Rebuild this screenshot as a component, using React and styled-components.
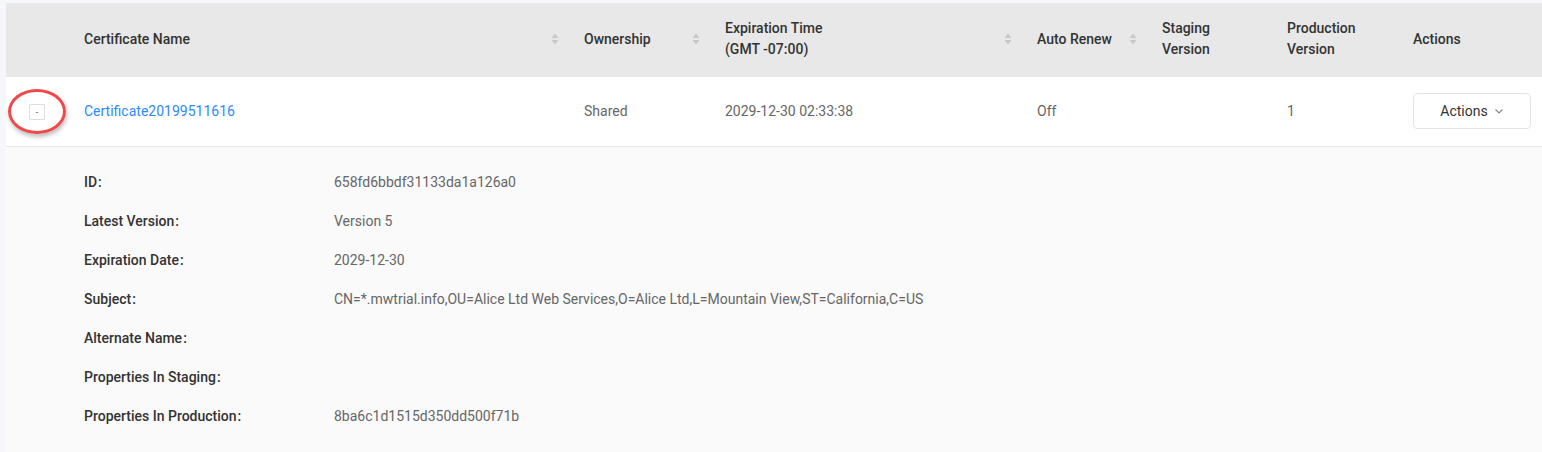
import styled, { createGlobalStyle } from "styled-components";

const GlobalStyle = createGlobalStyle`
  html, body {
    margin: 0;
    padding: 0;
    background: #f5f7fa;
  }
  body {
    padding: 3px 0 0 6px;
    font-family: Roboto, "Liberation Sans", Arial, sans-serif;
    font-size: 14px;
    color: #333;
    overflow: hidden;
  }
`;

const COLS = "62px 500px 141px 312px 125px 125px 126px 1fr";

const columns = [
  { title: "Certificate Name", sort: true },
  { title: "Ownership", sort: true },
  { title: ["Expiration Time", "(GMT -07:00)"], sort: true },
  { title: "Auto Renew", sort: true },
  { title: ["Staging", "Version"] },
  { title: ["Production", "Version"] },
  { title: "Actions" },
];

const details = [
  ["ID", "658fd6bbdf31133da1a126a0"],
  ["Latest Version", "Version 5"],
  ["Expiration Date", "2029-12-30"],
  ["Subject", "CN=*.mwtrial.info,OU=Alice Ltd Web Services,O=Alice Ltd,L=Mountain View,ST=California,C=US"],
  ["Alternate Name", ""],
  ["Properties In Staging", ""],
  ["Properties In Production", "8ba6c1d1515d350dd500f71b"],
];

const SortIcon = () => (
  <svg width="8" height="12" viewBox="0 0 8 12">
    <path d="M4 0.5 L7.5 5 L0.5 5 Z" fill="#c8c8c8" />
    <path d="M4 11.5 L7.5 7 L0.5 7 Z" fill="#c8c8c8" />
  </svg>
);

const Chevron = () => (
  <svg width="10" height="10" viewBox="0 0 10 10">
    <path d="M1.5 3.5 L5 7 L8.5 3.5" fill="none" stroke="#888" strokeWidth="1.1" />
  </svg>
);

const App = () => (
  <>
    <GlobalStyle />
    <Panel>
      <HeaderRow>
        <HeadCell />
        {columns.map((c, i) => (
          <HeadCell key={i} $sort={c.sort}>
            <div>
              {Array.isArray(c.title)
                ? c.title.map((t) => <div key={t}>{t}</div>)
                : c.title}
            </div>
            {c.sort && <SortIcon />}
          </HeadCell>
        ))}
      </HeaderRow>
      <BodyRow>
        <ExpandCell>
          <ExpandButton>-</ExpandButton>
          <Highlight />
        </ExpandCell>
        <Cell>
          <Link href="#">Certificate20199511616</Link>
        </Cell>
        <Cell>Shared</Cell>
        <Cell>2029-12-30 02:33:38</Cell>
        <Cell>Off</Cell>
        <Cell />
        <Cell>1</Cell>
        <Cell>
          <ActionButton>
            Actions <Chevron />
          </ActionButton>
        </Cell>
      </BodyRow>
      <Expanded>
        {details.map(([label, value]) => (
          <DetailRow key={label}>
            <Label>
              {label}
              <Colon>:</Colon>
            </Label>
            <Value>{value}</Value>
          </DetailRow>
        ))}
      </Expanded>
    </Panel>
  </>
);

const Panel = styled.div`
  width: 1536px;
`;

const HeaderRow = styled.div`
  display: grid;
  grid-template-columns: ${COLS};
  height: 74px;
  background: #e8e8e8;
`;

const HeadCell = styled.div`
  display: flex;
  align-items: center;
  justify-content: space-between;
  padding: 0 ${(p) => (p.$sort ? "9px" : "16px")} 2px 16px;
  font-weight: 500;
  color: #333;
  line-height: 21px;
`;

const BodyRow = styled.div`
  display: grid;
  grid-template-columns: ${COLS};
  height: 69px;
  background: #fff;
  border-bottom: 1px solid #e8e8e8;
`;

const Cell = styled.div`
  display: flex;
  align-items: center;
  padding: 0 16px 1px;
  color: #666;
`;

const ExpandCell = styled.div`
  position: relative;
  display: flex;
  align-items: center;
  padding-left: 23px;
`;

const ExpandButton = styled.button`
  width: 16px;
  height: 16px;
  padding: 0;
  border: 1px solid #ddd;
  border-radius: 1px;
  background: #fff;
  color: #555;
  font-size: 9px;
  line-height: 12px;
  font-family: inherit;
  cursor: pointer;
`;

const Highlight = styled.div`
  position: absolute;
  left: 2px;
  top: 12px;
  width: 52px;
  height: 39px;
  border: 3px solid #f2474b;
  border-radius: 50%;
  box-shadow: 1px 3px 4px rgba(0, 0, 0, 0.25);
  pointer-events: none;
`;

const Link = styled.a`
  color: #2f8af7;
  text-decoration: none;
`;

const ActionButton = styled.button`
  display: flex;
  align-items: center;
  justify-content: center;
  gap: 6px;
  width: 118px;
  height: 36px;
  border: 1px solid #e3e3e3;
  border-radius: 4px;
  background: #fff;
  color: #333;
  font-family: inherit;
  font-size: 14px;
  cursor: pointer;
`;

const Expanded = styled.div`
  background: #fafafa;
  padding: 25px 0 0 78px;
  height: 280px;
`;

const DetailRow = styled.div`
  display: grid;
  grid-template-columns: 250px 1fr;
  height: 39px;
  align-items: start;
  line-height: 20px;
`;

const Label = styled.div`
  font-weight: 500;
  color: #333;
`;

const Colon = styled.span`
  margin-left: 1px;
`;

const Value = styled.div`
  color: #666;
`;

export default App;
